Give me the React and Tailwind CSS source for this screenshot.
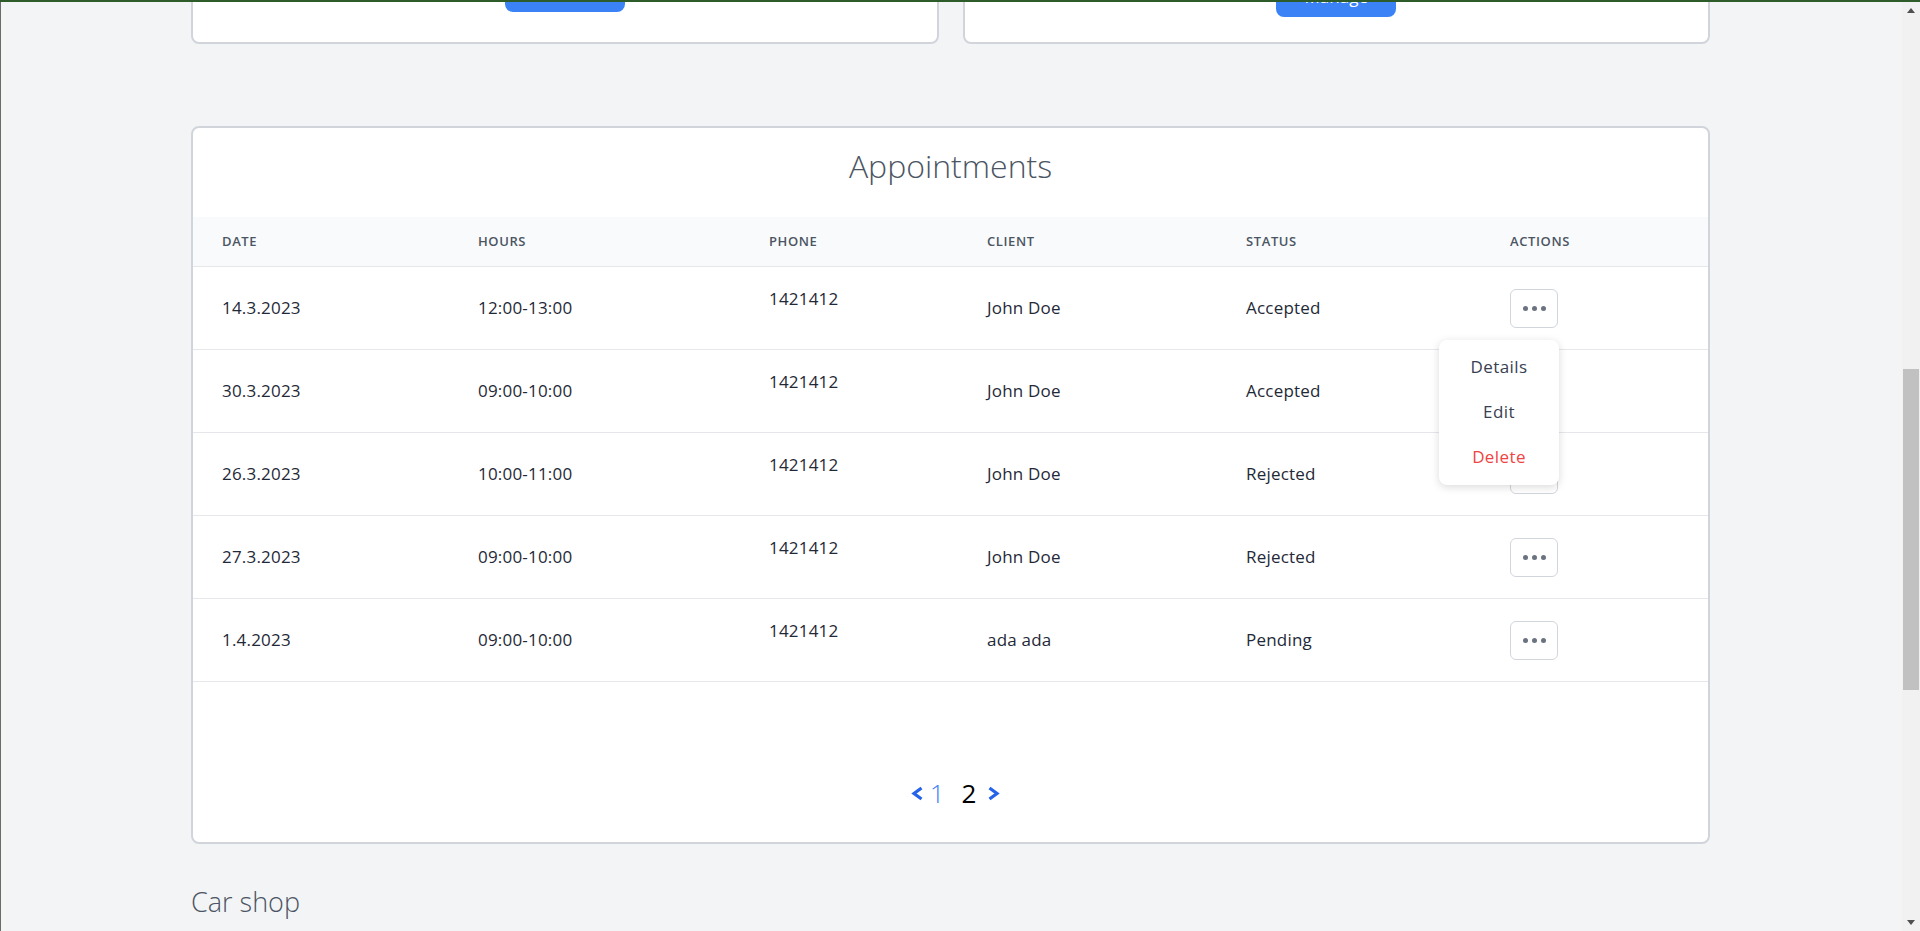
import React from "react";

const rows = [
  { date: "14.3.2023", hours: "12:00-13:00", phone: "1421412", client: "John Doe", status: "Accepted", open: true },
  { date: "30.3.2023", hours: "09:00-10:00", phone: "1421412", client: "John Doe", status: "Accepted" },
  { date: "26.3.2023", hours: "10:00-11:00", phone: "1421412", client: "John Doe", status: "Rejected" },
  { date: "27.3.2023", hours: "09:00-10:00", phone: "1421412", client: "John Doe", status: "Rejected" },
  { date: "1.4.2023", hours: "09:00-10:00", phone: "1421412", client: "ada ada", status: "Pending" },
];

const cols = "grid grid-cols-[256px_291px_218px_259px_264px_1fr] pl-[29px]";

function Dots() {
  return (
    <button className="w-[48px] h-[39px] rounded-md border border-gray-300 bg-white flex items-center justify-center gap-[4px]">
      <span className="w-[5px] h-[5px] rounded-full bg-[#6b7280]" />
      <span className="w-[5px] h-[5px] rounded-full bg-[#6b7280]" />
      <span className="w-[5px] h-[5px] rounded-full bg-[#6b7280]" />
    </button>
  );
}

function Chevron({ dir }) {
  return (
    <svg width="13" height="15" viewBox="0 0 13 15" fill="none">
      {dir === "left" ? (
        <polyline points="10.5,2 3,7.5 10.5,13" stroke="#2563eb" strokeWidth="3.2" strokeLinejoin="miter" />
      ) : (
        <polyline points="2.5,2 10,7.5 2.5,13" stroke="#2563eb" strokeWidth="3.2" strokeLinejoin="miter" />
      )}
    </svg>
  );
}

export default function App() {
  return (
    <div className="h-[931px] w-[1920px] overflow-hidden flex flex-col bg-[#f3f4f6] font-['Open_Sans',sans-serif]">
      <div className="h-[2px] bg-[#2e5b2a] shrink-0" />
      <div className="flex-1 flex min-h-0">
        <div className="w-px bg-[#6b6b6b] shrink-0" />
        <main className="flex-1 overflow-hidden">
          <div className="w-[1519px] ml-[190px]">
            <div className="grid grid-cols-2 gap-6 -mt-[58px]">
              <div className="h-[100px] bg-white border-2 border-[#d1d5db] rounded-lg flex flex-col items-center justify-end pb-[30px]">
                <button className="w-[120px] h-[40px] rounded-lg bg-[#3b82f6] text-white text-base">View</button>
              </div>
              <div className="h-[100px] bg-white border-2 border-[#d1d5db] rounded-lg flex flex-col items-center justify-end pb-[25px]">
                <button className="w-[120px] h-[40px] rounded-lg bg-[#3b82f6] text-white text-[17px]">Manage</button>
              </div>
            </div>

            <section className="mt-[82px] bg-white border-2 border-[#d1d5db] rounded-lg">
              <h2 className="pt-5 pb-[33px] text-center text-[32px] leading-[36px] font-light text-[#4b5563]">Appointments</h2>
              <div className={`${cols} h-[50px] items-center bg-[#f9fafb] border-b border-[#e5e7eb] text-[13px] tracking-[0.6px] font-semibold text-[#4b5563] uppercase`}>
                <div>Date</div>
                <div>Hours</div>
                <div>Phone</div>
                <div>Client</div>
                <div>Status</div>
                <div>Actions</div>
              </div>
              {rows.map((r, i) => (
                <div key={i} className={`${cols} h-[83px] items-center border-b border-[#e5e7eb] text-[17px] tracking-[0.2px] text-[#1f2937]`}>
                  <div>{r.date}</div>
                  <div>{r.hours}</div>
                  <div className="pb-[19px]">{r.phone}</div>
                  <div>{r.client}</div>
                  <div>{r.status}</div>
                  <div className="relative w-[48px]">
                    <Dots />
                    {r.open && (
                      <div className="absolute right-[-1px] top-full mt-[12px] z-10 w-[120px] py-[5px] bg-white rounded-lg shadow-[0_2px_8px_rgba(0,0,0,0.15)] flex flex-col text-[17px] tracking-[0.4px]">
                        <div className="h-[45px] flex items-center justify-center text-[#374151]">Details</div>
                        <div className="h-[45px] flex items-center justify-center text-[#374151]">Edit</div>
                        <div className="h-[45px] flex items-center justify-center text-[#ef4444]">Delete</div>
                      </div>
                    )}
                  </div>
                </div>
              ))}
              <div className="pt-[94px] pb-[32px] flex justify-center">
                <div className="ml-[10px] h-[34px] flex items-center text-[26px]">
                  <Chevron dir="left" />
                  <span className="ml-[6px] text-[#3b82f6] font-light">1</span>
                  <span className="ml-[17px] text-black">2</span>
                  <span className="ml-[11px]"><Chevron dir="right" /></span>
                </div>
              </div>
            </section>

            <h3 className="mt-[42px] text-[27px] leading-8 font-light text-[#4b5563]">Car shop</h3>
          </div>
        </main>
        <div className="w-[18px] shrink-0 bg-[#f1f1f1] flex flex-col">
          <div className="h-[17px] flex items-center justify-center">
            <svg width="8" height="5" viewBox="0 0 8 5"><polygon points="4,0 8,5 0,5" fill="#505050" /></svg>
          </div>
          <div className="flex-1 flex flex-col">
            <div className="mt-[350px] h-[321px] mx-px bg-[#c1c1c1]" />
          </div>
          <div className="h-[17px] flex items-center justify-center">
            <svg width="8" height="5" viewBox="0 0 8 5"><polygon points="0,0 8,0 4,5" fill="#505050" /></svg>
          </div>
        </div>
      </div>
    </div>
  );
}
